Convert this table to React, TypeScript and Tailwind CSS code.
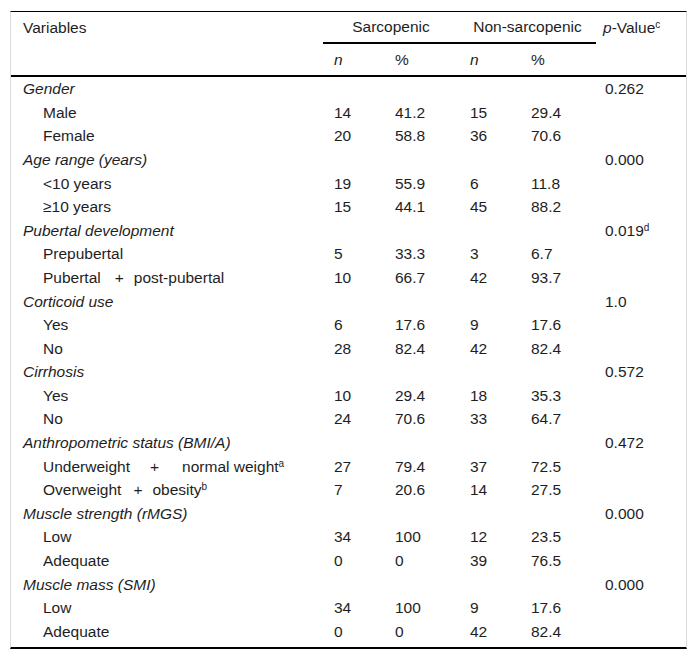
import React from 'react';

type Row =
  | { kind: 'cat'; label: string; p: string; pSup?: string }
  | { kind: 'item'; label: React.ReactNode; n1: string; p1: string; n2: string; p2: string };

const rows: Row[] = [
  { kind: 'cat', label: 'Gender', p: '0.262' },
  { kind: 'item', label: 'Male', n1: '14', p1: '41.2', n2: '15', p2: '29.4' },
  { kind: 'item', label: 'Female', n1: '20', p1: '58.8', n2: '36', p2: '70.6' },
  { kind: 'cat', label: 'Age range (years)', p: '0.000' },
  { kind: 'item', label: '<10 years', n1: '19', p1: '55.9', n2: '6', p2: '11.8' },
  { kind: 'item', label: '≥10 years', n1: '15', p1: '44.1', n2: '45', p2: '88.2' },
  { kind: 'cat', label: 'Pubertal development', p: '0.019', pSup: 'd' },
  { kind: 'item', label: 'Prepubertal', n1: '5', p1: '33.3', n2: '3', p2: '6.7' },
  {
    kind: 'item',
    label: (
      <>
        Pubertal<span className="ml-[14px] mr-[10px]">+</span>post-pubertal
      </>
    ),
    n1: '10', p1: '66.7', n2: '42', p2: '93.7',
  },
  { kind: 'cat', label: 'Corticoid use', p: '1.0' },
  { kind: 'item', label: 'Yes', n1: '6', p1: '17.6', n2: '9', p2: '17.6' },
  { kind: 'item', label: 'No', n1: '28', p1: '82.4', n2: '42', p2: '82.4' },
  { kind: 'cat', label: 'Cirrhosis', p: '0.572' },
  { kind: 'item', label: 'Yes', n1: '10', p1: '29.4', n2: '18', p2: '35.3' },
  { kind: 'item', label: 'No', n1: '24', p1: '70.6', n2: '33', p2: '64.7' },
  { kind: 'cat', label: 'Anthropometric status (BMI/A)', p: '0.472' },
  {
    kind: 'item',
    label: (
      <>
        Underweight<span className="ml-[20px] mr-[23px]">+</span>normal weight<sup className="text-[10px]">a</sup>
      </>
    ),
    n1: '27', p1: '79.4', n2: '37', p2: '72.5',
  },
  {
    kind: 'item',
    label: (
      <>
        Overweight<span className="ml-[12px] mr-[10px]">+</span>obesity<sup className="text-[10px]">b</sup>
      </>
    ),
    n1: '7', p1: '20.6', n2: '14', p2: '27.5',
  },
  { kind: 'cat', label: 'Muscle strength (rMGS)', p: '0.000' },
  { kind: 'item', label: 'Low', n1: '34', p1: '100', n2: '12', p2: '23.5' },
  { kind: 'item', label: 'Adequate', n1: '0', p1: '0', n2: '39', p2: '76.5' },
  { kind: 'cat', label: 'Muscle mass (SMI)', p: '0.000' },
  { kind: 'item', label: 'Low', n1: '34', p1: '100', n2: '9', p2: '17.6' },
  { kind: 'item', label: 'Adequate', n1: '0', p1: '0', n2: '42', p2: '82.4' },
];

// column grid shared by header and body
const cols = 'grid grid-cols-[312px_61px_75px_61px_76px_92px]';

export default function App() {
  return (
    <div className="min-h-[661px] bg-white pt-[11px] pl-[10px] text-[15.5px] text-[#1e1e1e] font-['Liberation_Sans',Arial,sans-serif]">
      <div className="w-[677px] border-t border-b-2 border-t-black border-b-black border-x border-x-[#dcdcdc] pb-[4px]">
        {/* Header */}
        <div className={`${cols} border-b-2 border-black`}>
          <div className="row-span-2 pl-[12px] h-[32px] flex items-center">Variables</div>
          <div className="col-span-2 h-[32px] flex items-center justify-center border-b-2 border-black">Sarcopenic</div>
          <div className="col-span-2 h-[32px] flex items-center justify-center border-b-2 border-black">Non-sarcopenic</div>
          <div className="row-span-2 pl-[7px] h-[32px] flex items-center">
            <span>
              <i>p</i>-Value<sup className="text-[10px]">c</sup>
            </span>
          </div>
          <div className="pl-[11px] h-[31px] flex items-center italic">n</div>
          <div className="pl-[11px] h-[31px] flex items-center">%</div>
          <div className="pl-[11px] h-[31px] flex items-center italic">n</div>
          <div className="pl-[11px] h-[31px] flex items-center">%</div>
        </div>

        {/* Body */}
        <div>
          {rows.map((r, i) =>
            r.kind === 'cat' ? (
              <div key={i} className={`${cols} h-[23.6px] items-center`}>
                <div className="pl-[12px] italic whitespace-nowrap">{r.label}</div>
                <div />
                <div />
                <div />
                <div />
                <div className="pl-[9px]">
                  {r.p}
                  {r.pSup && <sup className="text-[10px]">{r.pSup}</sup>}
                </div>
              </div>
            ) : (
              <div key={i} className={`${cols} h-[23.6px] items-center`}>
                <div className="pl-[32px] whitespace-nowrap">{r.label}</div>
                <div className="pl-[11px]">{r.n1}</div>
                <div className="pl-[11px]">{r.p1}</div>
                <div className="pl-[11px]">{r.n2}</div>
                <div className="pl-[11px]">{r.p2}</div>
                <div />
              </div>
            )
          )}
        </div>
      </div>
    </div>
  );
}
